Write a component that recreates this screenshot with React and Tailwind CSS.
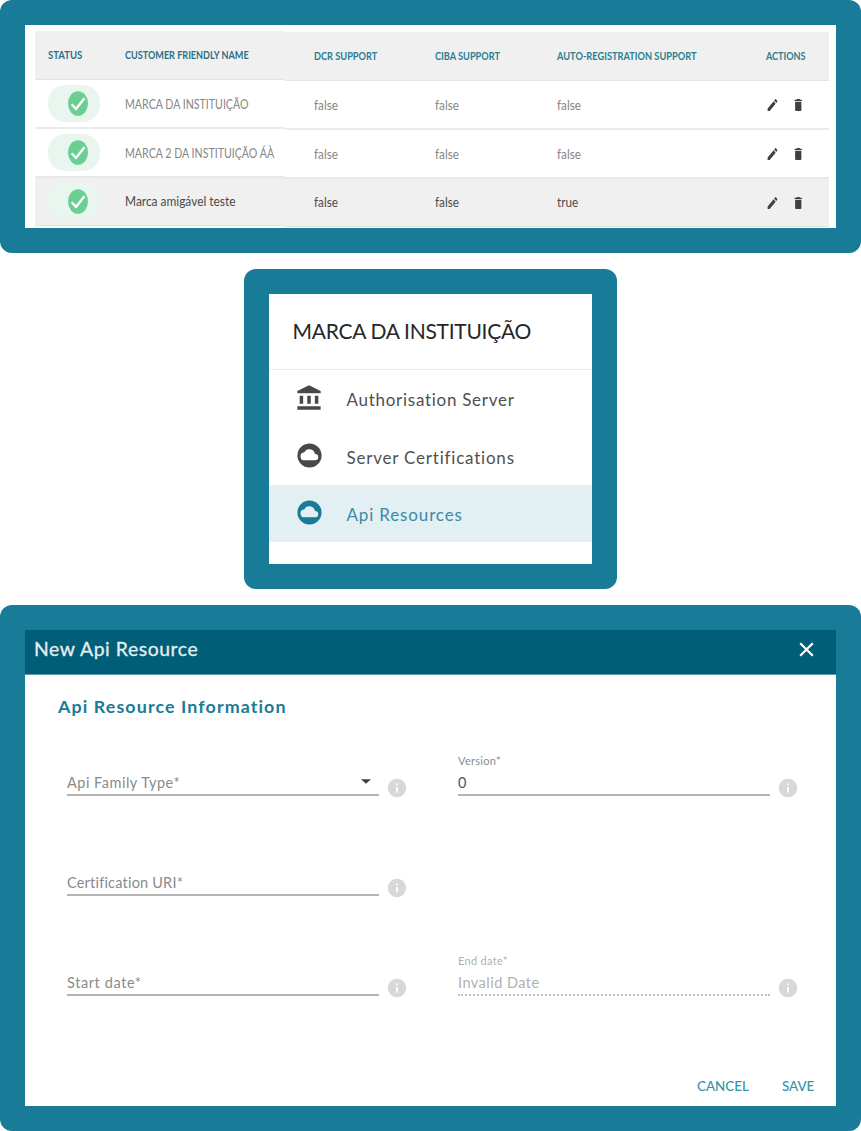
import { MdAccountBalance, MdDelete, MdEdit, MdInfo } from "react-icons/md";

function Panel({ className, children }) {
  return (
    <section className={`rounded-xl bg-[#187b98] p-[25px] ${className}`}>
      <div className="h-full w-full overflow-hidden bg-white">{children}</div>
    </section>
  );
}

function Label({ className = "", children }) {
  return <span className={`inline-block origin-left whitespace-pre ${className}`}>{children}</span>;
}

function CloudIcon({ className }) {
  return (
    <svg className={`size-[29px] ${className}`} viewBox="0 0 24 24" fill="currentColor" fillRule="evenodd">
      <path d="M12 2a10 10 0 1 0 0 20 10 10 0 0 0 0-20zM16.6 16H7.9a3.2 3.2 0 0 1-.3-6.4A4.7 4.7 0 0 1 16.5 10.7 2.65 2.65 0 0 1 16.6 16z" />
    </svg>
  );
}

const rowStyles = [
  "h-[49px] border-b-2 border-[#ebebeb] text-[#868686]",
  "h-[49px] border-b-2 border-[#e9e9e9] text-[#868686]",
  "h-12 border-b border-[#e2e2e2] bg-[#f0f0f0] pb-px text-[#4a4a4a]",
];

const brands = [
  { name: "MARCA DA INSTITUIÇÃO", fit: "scale-x-[0.817]", auto: "false" },
  { name: "MARCA 2 DA INSTITUIÇÃO ÁÀ", fit: "scale-x-[0.817]", auto: "false" },
  { name: "Marca amigável teste", fit: "scale-x-[0.917]", auto: "true" },
];

function StatusPill() {
  return (
    <div className="ml-[13px] flex h-[37px] w-[52px] items-center rounded-[17px] bg-[#e9f6f0] pl-[19.5px]">
      <svg className="h-[25px] w-[20px]" viewBox="0 0 20 25">
        <ellipse cx="10" cy="12.5" rx="10" ry="12.3" fill="#6bcf94" />
        <path d="M3.7 13.2 8 18 16.4 7.2" fill="none" stroke="white" strokeWidth="2.3" />
      </svg>
    </div>
  );
}

function BrandTable() {
  return (
    <div className="flex pt-1.5 pl-2.5 text-[13px] leading-4">
      <div className="w-[250px]">
        <div className="grid h-[49px] grid-cols-[90px_1fr] items-center border-b border-[#e4e4e4] bg-[#f0f0f0] text-xs font-bold text-[#2b7186]">
          <Label className="ml-[13px] scale-x-[0.795]">STATUS</Label>
          <Label className="scale-x-[0.757]">CUSTOMER FRIENDLY NAME</Label>
        </div>
        {brands.map((b, i) => (
          <div key={b.name} className={`grid grid-cols-[90px_1fr] items-center ${rowStyles[i]}`}>
            <StatusPill />
            <Label className={b.fit}>{b.name}</Label>
          </div>
        ))}
      </div>
      <div className="w-[543.5px] pt-px">
        <div className="grid h-[49px] grid-cols-[121px_122.5px_208.5px_1fr] items-center border-b border-[#e4e4e4] bg-[#f0f0f0] pl-[28.7px] text-xs font-bold text-[#2b7e92]">
          <Label className="scale-x-[0.768]">DCR SUPPORT</Label>
          <Label className="scale-x-[0.765]">CIBA SUPPORT</Label>
          <Label className="scale-x-[0.77]">AUTO-REGISTRATION SUPPORT</Label>
          <Label className="scale-x-[0.757]">ACTIONS</Label>
        </div>
        {brands.map((b, i) => (
          <div key={b.name} className={`grid grid-cols-[121px_122.5px_208.5px_1fr] items-center pl-[28.7px] ${rowStyles[i]}`}>
            <Label className="scale-x-[0.9]">false</Label>
            <Label className="scale-x-[0.9]">false</Label>
            <Label className="scale-x-[0.9]">{b.auto}</Label>
            <div className="flex items-center pt-px text-[#404040]">
              <MdEdit className="h-4 w-[13px]" preserveAspectRatio="none" />
              <MdDelete className="ml-[13.5px] h-4 w-[12.5px]" preserveAspectRatio="none" />
            </div>
          </div>
        ))}
      </div>
    </div>
  );
}

function ServerMenu() {
  return (
    <div>
      <div className="flex h-[76px] items-center border-b border-[#ececec] pb-0.5 pl-[23.5px] text-[21px] text-[#262626]">
        <Label className="tracking-[-0.28px]">MARCA DA INSTITUIÇÃO</Label>
      </div>
      <nav className="text-[17px] text-[#505050]">
        <div className="flex h-[57px] items-center pb-px pl-[26px]">
          <MdAccountBalance className="size-7 text-[#484848]" />
          <Label className="ml-[23.5px] pt-1 tracking-[0.72px]">Authorisation Server</Label>
        </div>
        <div className="flex h-[58px] items-center pb-0.5 pl-[25.5px]">
          <CloudIcon className="text-[#484848]" />
          <Label className="ml-[23px] pt-1.5 tracking-[0.79px]">Server Certifications</Label>
        </div>
        <div className="flex h-[57px] items-center bg-[#e2eff3] pb-0.5 pl-[25.5px] text-[#3b8ca3]">
          <CloudIcon className="text-[#187b98]" />
          <Label className="ml-[23px] pt-1 tracking-[0.85px]">Api Resources</Label>
        </div>
      </nav>
    </div>
  );
}

function Field({ label, value, select, disabled, fit = "" }) {
  return (
    <div className={`flex h-[100px] items-start ${disabled ? "text-[#b0b0b0]" : "text-[#8a8a8a]"}`}>
      <div className={`h-[42px] w-[312px] ${disabled ? "border-b-2 border-dotted border-[#c0c0c0]" : "border-b-2 border-[#b4b4b4]"}`}>
        <div className="h-[18px] text-[11px] leading-[14px]">
          {value && <Label className="tracking-[0.3px]">{label}</Label>}
        </div>
        <div className="flex items-center justify-between text-[14.5px] leading-[22px]">
          <Label className={value && !disabled ? "text-[#555]" : fit}>{value ?? label}</Label>
          {select && (
            <svg className="mr-2 mb-1 h-[5px] w-[10px] text-[#404040]" viewBox="0 0 11 5">
              <path d="M0 0h11L5.5 5z" fill="currentColor" />
            </svg>
          )}
        </div>
      </div>
      <MdInfo className="mt-[23px] ml-[7px] size-[22px] text-[#d7d8da]" />
    </div>
  );
}

function ApiResourceDialog() {
  return (
    <div className="flex h-full flex-col">
      <header className="flex h-[45px] items-center justify-between border-b border-[#5f9bab] bg-[#005e78] pr-[22px] pb-1.5 pl-[8.5px] text-[19px] text-[#e4eef1]">
        <Label className="scale-x-[1.02] tracking-[0.55px] [-webkit-text-stroke:0.3px_#e4eef1]">New Api Resource</Label>
        <svg className="size-[15px]" viewBox="0 0 15 15" fill="none" stroke="white" strokeWidth="2.2">
          <path d="M1.2 1.2l12.6 12.6M13.8 1.2L1.2 13.8" />
        </svg>
      </header>
      <div className="px-[33px] pt-5">
        <h2 className="text-[17.5px] leading-6 font-bold text-[#187b98]">
          <Label className="scale-x-[1.02] tracking-[1.08px]">Api Resource Information</Label>
        </h2>
        <div className="mt-[35px] grid h-[300px] grid-cols-[391px_1fr] content-start pl-[9px]">
          <Field label="Api Family Type*" fit="tracking-[0.5px]" select />
          <Field label="Version*" value="0" />
          <Field label="Certification URI*" fit="tracking-[0.2px]" />
          <div />
          <Field label="Start date*" fit="tracking-[0.6px]" />
          <Field label="End date*" value="Invalid Date" fit="tracking-[0.47px]" disabled />
        </div>
      </div>
      <footer className="mt-5 flex justify-end gap-[31px] pr-5 text-sm leading-6 font-medium text-[#3593a8]">
        <Label className="scale-x-[0.955]">CANCEL</Label>
        <Label className="scale-x-[0.955]">SAVE</Label>
      </footer>
    </div>
  );
}

export default function App() {
  return (
    <main className="flex h-[1131px] w-[861px] flex-col items-center gap-4 bg-white font-['Lato',sans-serif]">
      <Panel className="h-[253px] w-full">
        <BrandTable />
      </Panel>
      <Panel className="h-[320px] w-[373px]">
        <ServerMenu />
      </Panel>
      <Panel className="h-[526px] w-full">
        <ApiResourceDialog />
      </Panel>
    </main>
  );
}
